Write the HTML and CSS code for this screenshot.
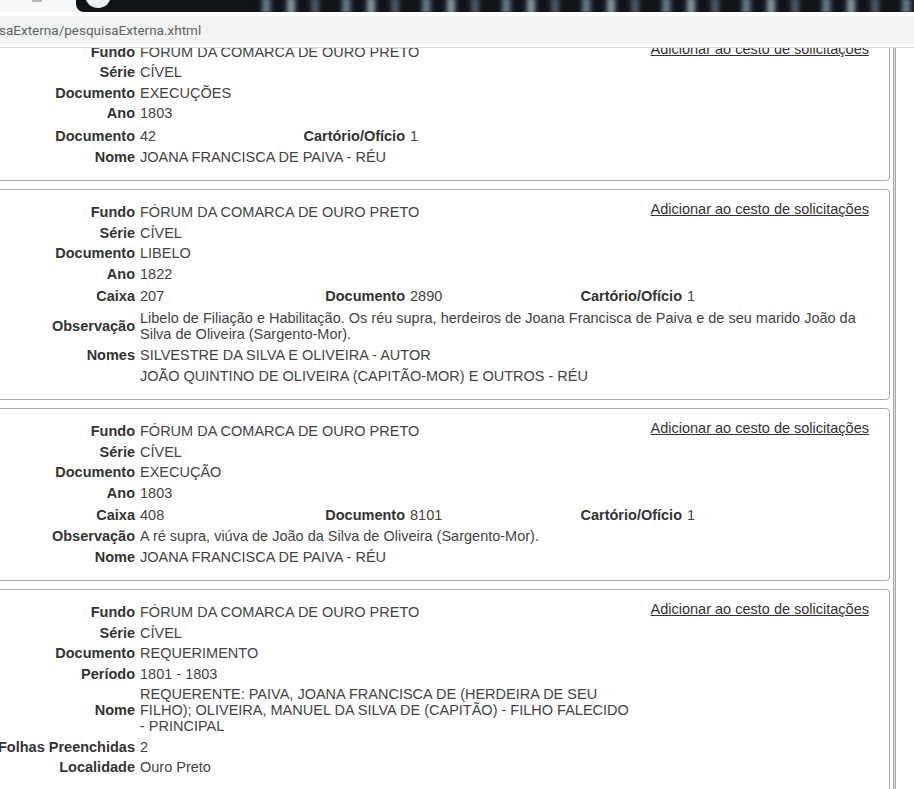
FILE: index.html
```html
<!DOCTYPE html>
<html lang="pt-BR">
  <head>
    <meta charset="UTF-8" />
    <meta name="viewport" content="width=device-width, initial-scale=1.0" />
    <title>Pesquisa Externa</title>
    <link rel="stylesheet" href="styles.css">
  </head>
  <body>
    <header class="navegador">
      <div class="abas">
        <div class="aba-clara"><span class="aba-marca"></span></div>
        <div class="aba-escura">
          <span class="aba-icone"></span>
          <span class="aba-brilho"></span>
        </div>
      </div>
      <div class="barra">
        <div class="omnibox"><span class="url">saExterna/pesquisaExterna.xhtml</span></div>
      </div>
    </header>

    <div class="viewport">
      <main class="resultados">

        <article class="registro">
          <div class="linha">
            <span class="rotulo">Fundo</span>
            <span class="valor">FÓRUM DA COMARCA DE OURO PRETO</span>
            <a class="link-cesto" href="#">Adicionar ao cesto de solicitações</a>
          </div>
          <div class="linha"><span class="rotulo">Série</span><span class="valor">CÍVEL</span></div>
          <div class="linha"><span class="rotulo">Documento</span><span class="valor">EXECUÇÕES</span></div>
          <div class="linha"><span class="rotulo">Ano</span><span class="valor">1803</span></div>
          <div class="linha composta">
            <span class="rotulo">Documento</span>
            <div class="valor campos">
              <span>42</span>
              <span class="rotulo-sub">Cartório/Ofício</span>
              <span>1</span>
            </div>
          </div>
          <div class="linha"><span class="rotulo">Nome</span><span class="valor">JOANA FRANCISCA DE PAIVA - RÉU</span></div>
        </article>

        <article class="registro">
          <div class="linha">
            <span class="rotulo">Fundo</span>
            <span class="valor">FÓRUM DA COMARCA DE OURO PRETO</span>
            <a class="link-cesto" href="#">Adicionar ao cesto de solicitações</a>
          </div>
          <div class="linha"><span class="rotulo">Série</span><span class="valor">CÍVEL</span></div>
          <div class="linha"><span class="rotulo">Documento</span><span class="valor">LIBELO</span></div>
          <div class="linha"><span class="rotulo">Ano</span><span class="valor">1822</span></div>
          <div class="linha composta">
            <span class="rotulo">Caixa</span>
            <div class="valor campos">
              <span>207</span>
              <span class="rotulo-sub">Documento</span>
              <span>2890</span>
              <span class="rotulo-sub">Cartório/Ofício</span>
              <span>1</span>
            </div>
          </div>
          <div class="linha dupla">
            <span class="rotulo">Observação</span>
            <span class="valor">Libelo de Filiação e Habilitação. Os réu supra, herdeiros de Joana Francisca de Paiva e de seu marido João da Silva de Oliveira (Sargento-Mor).</span>
          </div>
          <div class="linha"><span class="rotulo">Nomes</span><span class="valor">SILVESTRE DA SILVA E OLIVEIRA - AUTOR</span></div>
          <div class="linha"><span class="rotulo"></span><span class="valor">JOÃO QUINTINO DE OLIVEIRA (CAPITÃO-MOR) E OUTROS - RÉU</span></div>
        </article>

        <article class="registro">
          <div class="linha">
            <span class="rotulo">Fundo</span>
            <span class="valor">FÓRUM DA COMARCA DE OURO PRETO</span>
            <a class="link-cesto" href="#">Adicionar ao cesto de solicitações</a>
          </div>
          <div class="linha"><span class="rotulo">Série</span><span class="valor">CÍVEL</span></div>
          <div class="linha"><span class="rotulo">Documento</span><span class="valor">EXECUÇÃO</span></div>
          <div class="linha"><span class="rotulo">Ano</span><span class="valor">1803</span></div>
          <div class="linha composta">
            <span class="rotulo">Caixa</span>
            <div class="valor campos">
              <span>408</span>
              <span class="rotulo-sub">Documento</span>
              <span>8101</span>
              <span class="rotulo-sub">Cartório/Ofício</span>
              <span>1</span>
            </div>
          </div>
          <div class="linha"><span class="rotulo">Observação</span><span class="valor">A ré supra, viúva de João da Silva de Oliveira (Sargento-Mor).</span></div>
          <div class="linha"><span class="rotulo">Nome</span><span class="valor">JOANA FRANCISCA DE PAIVA - RÉU</span></div>
        </article>

        <article class="registro">
          <div class="linha">
            <span class="rotulo">Fundo</span>
            <span class="valor">FÓRUM DA COMARCA DE OURO PRETO</span>
            <a class="link-cesto" href="#">Adicionar ao cesto de solicitações</a>
          </div>
          <div class="linha"><span class="rotulo">Série</span><span class="valor">CÍVEL</span></div>
          <div class="linha"><span class="rotulo">Documento</span><span class="valor">REQUERIMENTO</span></div>
          <div class="linha"><span class="rotulo">Período</span><span class="valor">1801 - 1803</span></div>
          <div class="linha">
            <span class="rotulo">Nome</span>
            <span class="valor estreito">REQUERENTE: PAIVA, JOANA FRANCISCA DE (HERDEIRA DE SEU FILHO); OLIVEIRA, MANUEL DA SILVA DE (CAPITÃO) - FILHO FALECIDO - PRINCIPAL</span>
          </div>
          <div class="linha"><span class="rotulo">Folhas Preenchidas</span><span class="valor">2</span></div>
          <div class="linha"><span class="rotulo">Localidade</span><span class="valor">Ouro Preto</span></div>
        </article>

      </main>
      <div class="borda-direita"></div>
    </div>
  </body>
</html>
```

FILE: styles.css
```css
body {
  margin: 0;
  font-family: 'Liberation Sans', Arial, sans-serif;
  font-size: 14.5px;
  background-color: white;
  overflow: hidden;
}
.navegador {
  height: 48px;
  border-bottom: 1px solid #dadce0;
  box-sizing: border-box;
}
.abas {
  display: flex;
  height: 12px;
  background-color: #f7f8f9;
}
.aba-clara {
  width: 76px;
  flex: none;
}
.aba-marca {
  display: block;
  width: 10px;
  height: 2px;
  margin-left: 32px;
  background-color: #b5b9be;
}
.aba-escura {
  flex: 1;
  display: flex;
  align-items: flex-start;
  background-color: #101317;
  border-bottom-left-radius: 8px;
  overflow: hidden;
}
.aba-icone {
  flex: none;
  width: 26px;
  height: 26px;
  margin: -18px 0 0 9px;
  border-radius: 50%;
  background-color: #eef0f2;
}
.aba-brilho {
  flex: 1;
  height: 16px;
  margin: -2px 0 0 140px;
  background: repeating-linear-gradient(90deg, #101317 0 9px, #7f93aa 13px 17px, #101317 22px 34px, #a9bdd3 38px 42px, #101317 46px 58px, #5d6f84 62px 66px, #101317 70px 80px);
  filter: blur(2px);
  opacity: 0.8;
}
.barra {
  height: 35px;
  padding-top: 4px;
  box-sizing: border-box;
  background-color: white;
}
.omnibox {
  height: 28px;
  line-height: 28px;
  background-color: #f1f3f4;
  font-family: Roboto, 'Noto Sans', sans-serif;
  font-size: 13.5px;
  color: #5f6368;
  white-space: nowrap;
}
.url {
  margin-left: -1px;
}
.viewport {
  display: flex;
  height: 741px;
  overflow: hidden;
}
.resultados {
  flex: none;
  width: 906px;
  margin-left: -16px;
  margin-top: -19.5px;
  display: flex;
  flex-direction: column;
  gap: 8px;
}
.borda-direita {
  flex: none;
  width: 1px;
  margin-left: 3px;
  background-color: #dcdcdc;
  border-left: 1px solid #a9a9a9;
  border-right: 1px solid #a9a9a9;
}
.registro {
  border: 1px solid #aaaaaa;
  border-radius: 4px;
  padding: 12px 20px 13px 0;
  box-sizing: border-box;
}
.linha {
  display: flex;
  align-items: center;
  padding: 2px 0 2.5px;
  line-height: 16px;
}
.linha.composta {
  padding: 4px 0 3px;
}
.linha.dupla {
  padding: 3px 0;
}
.rotulo {
  flex: none;
  width: 150px;
  text-align: right;
  font-weight: bold;
  color: #333;
  white-space: nowrap;
}
.valor {
  flex: 1;
  min-width: 0;
  padding-left: 5px;
  color: #444;
}
.valor.estreito {
  flex: none;
  max-width: 496px;
}
.campos {
  display: grid;
  grid-template-columns: 160px 110px 160px 117px 1fr;
  align-items: center;
}
.rotulo-sub {
  text-align: right;
  padding-right: 5px;
  font-weight: bold;
  color: #333;
  white-space: nowrap;
}
.link-cesto {
  flex: none;
  align-self: flex-start;
  margin-top: -3px;
  color: #333;
  text-decoration: underline;
  white-space: nowrap;
}
```
